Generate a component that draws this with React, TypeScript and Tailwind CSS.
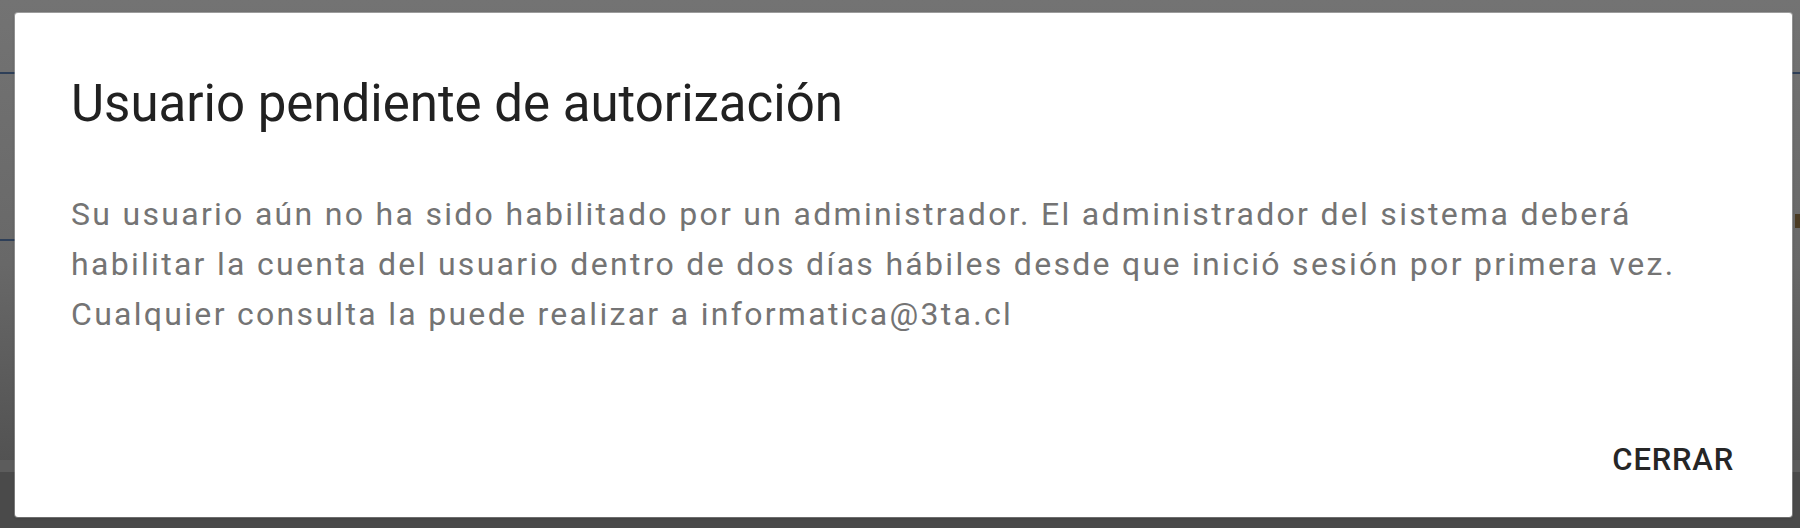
export default function App() {
  return (
    <div className="relative h-[528px] w-full overflow-hidden font-['Roboto',sans-serif]">
      {/* page behind the backdrop */}
      <div className="flex h-full flex-col bg-gradient-to-b from-[#737373] via-[#686868] to-[#4b4b4b]">
        <div className="h-[72px] shrink-0" />
        <div className="h-[2px] shrink-0 bg-[#2e3f58]" />
        <div className="flex h-[140px] shrink-0 justify-end">
          <div className="mt-[140px] h-[14px] w-[5px] bg-[#4a3a22]" />
        </div>
        <div className="h-[25px] shrink-0" />
        <div className="h-[2px] w-[15px] shrink-0 bg-[#2e3f58]" />
        <div className="h-[219px] shrink-0" />
        <div className="h-[12px] shrink-0 bg-[#5c5c5c]" />
        <div className="flex-1 bg-[#4a4a4a]" />
      </div>

      {/* modal dialog */}
      <div className="absolute inset-0 flex pt-[13px] pr-[8px] pb-[11px] pl-[15px]">
        <div className="flex flex-1 flex-col rounded-[3px] bg-white px-[56px] pt-[60px] pb-[33px] shadow-[0_1px_3px_rgba(0,0,0,0.3),0_0_0_1px_rgba(255,255,255,0.35)]">
          <h2 className="text-[51px] leading-[62px] font-normal text-[#212121]">
            Usuario pendiente de autorización
          </h2>
          <p className="mt-[54px] text-[32px] leading-[50px] tracking-[2.3px] text-[#747474]">
            Su usuario aún no ha sido habilitado por un administrador. El administrador del sistema deberá
            habilitar la cuenta del usuario dentro de dos días hábiles desde que inició sesión por primera vez.
            Cualquier consulta la puede realizar a informatica@3ta.cl
          </p>
          <div className="mt-auto flex justify-end">
            <button className="-mr-[2px] px-[4px] text-[31px] leading-[48px] font-medium tracking-[0.8px] text-[#262626] uppercase">
              Cerrar
            </button>
          </div>
        </div>
      </div>
    </div>
  )
}
